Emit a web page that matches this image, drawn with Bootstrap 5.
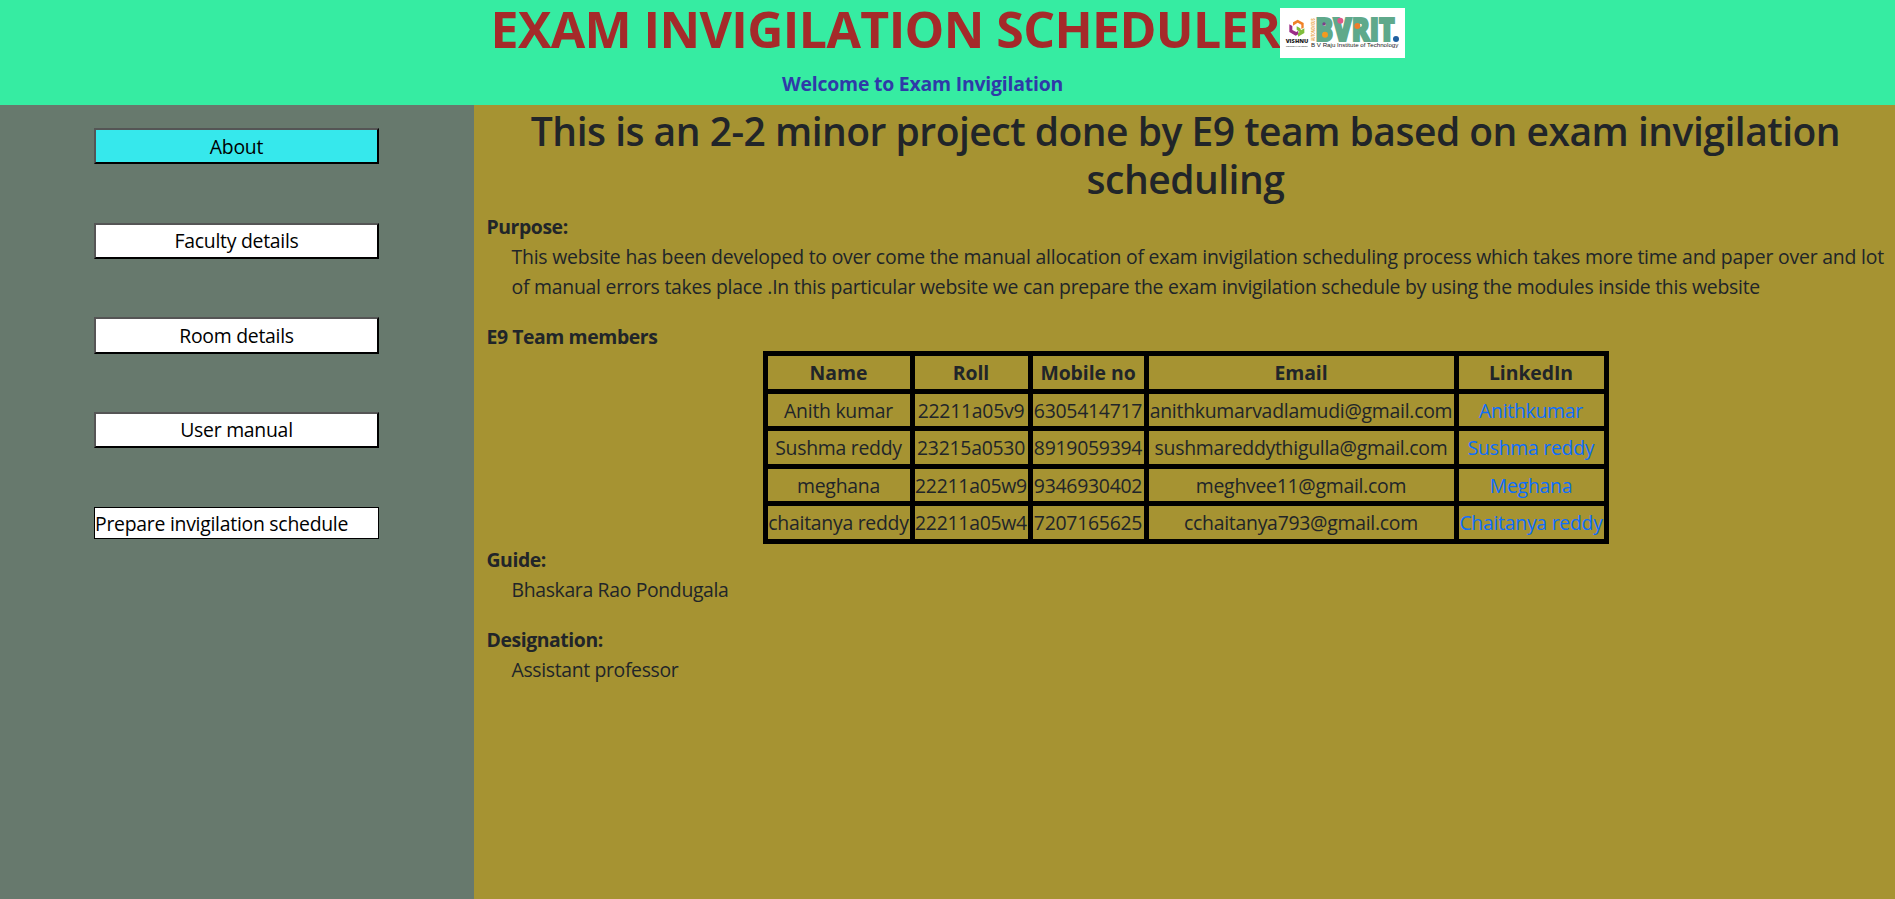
<!DOCTYPE html>
<html lang="en">
<head>
<meta charset="utf-8">
<meta name="viewport" content="width=device-width, initial-scale=1">
<title>Exam Invigilation Scheduler</title>
<link rel="stylesheet" href="https://cdn.jsdelivr.net/npm/bootstrap@5.3.0/dist/css/bootstrap.min.css">
<script src="https://cdn.jsdelivr.net/npm/bootstrap@5.3.0/dist/js/bootstrap.bundle.min.js"></script>
<style>
  body { font-family: "Open Sans", "Noto Sans", sans-serif; font-size: 19.4px; line-height: 30px; letter-spacing: -.2px; color: #212529; }
  .site-header { background: #36eca2; height: 105px; }
  .site-title { font-size: 50px; line-height: 58px; letter-spacing: -.61px; color: brown; padding-left: 1px; }
  .site-logo { margin-top: 8px; }
  .welcome { color: #2f3aa8; margin-top: 10.5px; padding-right: 50px; }
  .side { width: 474px; background: #67796d; padding: 23px 0 0 94px; }
  .side-item { height: 94.6px; }
  .side-btn { width: 285px; height: 36.4px; line-height: 30px; padding: 1px 0 0; background: #fff; color: #000; letter-spacing: -.26px;
    border: 2px solid; border-color: #555 #000 #000 #555; }
  .side-btn.current { background: #36e8ec; }
  .side-btn.plain { height: 32px; padding: 1px 0 0; border: 1px solid #000; margin-top: .6px; }
  .content { background: #a69332; }
  .content h1 { font-size: 39px; font-weight: 600; line-height: 48px; letter-spacing: -.5px; margin-bottom: 9px; padding: 2.3px 0 0 2px; }
  .content dl { margin: 0 0 0 12.5px; }
  .content dt { letter-spacing: -.42px; }
  .content dd { margin: 0 0 20px 25px; white-space: nowrap; letter-spacing: -.34px; }
  .content dd.purpose { letter-spacing: -.2px; }
  .purpose span { letter-spacing: -.243px; }
  .team { width: 846px; table-layout: fixed; border-collapse: collapse; text-align: center; white-space: nowrap; margin: -1.3px auto 1.3px; position: relative; left: 1px; }
  .team th, .team td { border: 5px solid #000; padding: 1.5px 0 0 0; height: 37.5px; letter-spacing: -.26px; }
  .team th { letter-spacing: -.05px; }
</style>
</head>
<body class="vh-100 d-flex flex-column overflow-hidden">
<header class="site-header flex-shrink-0">
  <div class="d-flex justify-content-center align-items-start">
    <h1 class="site-title fw-bold mb-0 text-nowrap">EXAM INVIGILATION SCHEDULER</h1>
    <svg class="site-logo" width="125" height="50" viewBox="33 24 375 150" role="img" aria-label="BVRIT">
      <rect x="33" y="24" width="375" height="150" fill="#fff"/>
      <path d="M72 77V67L86 59L104 69V83L97 87V74L86 68Z" fill="#f08228"/>
      <path d="M61 73L70 78V90L82 96L88 92V103L80 107L61 96Z" fill="#9b2c86"/>
      <path d="M83 79L94 85L96 91L106 85V99L87 110V99L92 96L83 89Z" fill="#80bd3c"/>
      <g font-family="'Liberation Sans', sans-serif" letter-spacing="0">
        <text x="50" y="130" font-family="'Open Sans', sans-serif" font-size="15" font-weight="800" textLength="68" lengthAdjust="spacingAndGlyphs" fill="#222">VISHNU</text>
        <text x="51" y="140" font-size="7" font-weight="700" textLength="65" lengthAdjust="spacingAndGlyphs" fill="#444">UNIVERSAL LEARNING</text>
        <text transform="translate(138 123) rotate(-90)" font-size="14" font-weight="700" textLength="68" lengthAdjust="spacingAndGlyphs" fill="#e9a13b">AUTONOMOUS</text>
        <text x="139" y="122" font-family="'Open Sans', sans-serif" font-weight="800" font-size="94" fill="#5fa98b" stroke="#5fa98b" stroke-width="6" textLength="238" lengthAdjust="spacingAndGlyphs">BVRIT</text>
        <circle cx="165" cy="72" r="5" fill="#7a3f8c"/>
        <circle cx="168" cy="104" r="9" fill="#f39a1e"/>
        <circle cx="214" cy="62" r="9" fill="#e0568a"/>
        <circle cx="265" cy="78" r="9" fill="#ee7d2b"/>
        <circle cx="381" cy="117" r="9" fill="#1f5fa0"/>
        <text x="126" y="140" font-size="17" textLength="262" lengthAdjust="spacingAndGlyphs" fill="#222">B V Raju Institute of Technology</text>
      </g>
    </svg>
  </div>
  <p class="welcome fw-bold text-center mb-0">Welcome to Exam Invigilation</p>
</header>
<div class="d-flex flex-grow-1">
  <nav class="side flex-shrink-0">
    <div class="side-item"><button class="side-btn current d-block">About</button></div>
    <div class="side-item"><button class="side-btn d-block">Faculty details</button></div>
    <div class="side-item"><button class="side-btn d-block">Room details</button></div>
    <div class="side-item"><button class="side-btn d-block">User manual</button></div>
    <div class="side-item"><button class="side-btn plain d-block text-start">Prepare invigilation schedule</button></div>
  </nav>
  <main class="content flex-grow-1">
    <h1 class="text-center">This is an 2-2 minor project done by E9 team based on exam invigilation<br>scheduling</h1>
    <dl>
      <dt>Purpose:</dt>
      <dd class="purpose">This website has been developed to over come the manual allocation of exam invigilation scheduling process which takes more time and paper over and lot<br><span>of manual errors takes place .In this particular website we can prepare the exam invigilation schedule by using the modules inside this website</span></dd>
      <dt>E9 Team members</dt>
    </dl>
    <table class="team">
      <colgroup><col style="width:147px"><col style="width:118px"><col style="width:116px"><col style="width:310px"><col style="width:150px"></colgroup>
      <thead><tr><th>Name</th><th>Roll</th><th>Mobile no</th><th>Email</th><th>LinkedIn</th></tr></thead>
      <tbody>
        <tr><td>Anith kumar</td><td>22211a05v9</td><td>6305414717</td><td>anithkumarvadlamudi@gmail.com</td><td><a href="#" class="text-decoration-none">Anithkumar</a></td></tr>
        <tr><td>Sushma reddy</td><td>23215a0530</td><td>8919059394</td><td>sushmareddythigulla@gmail.com</td><td><a href="#" class="text-decoration-none">Sushma reddy</a></td></tr>
        <tr><td>meghana</td><td>22211a05w9</td><td>9346930402</td><td>meghvee11@gmail.com</td><td><a href="#" class="text-decoration-none">Meghana</a></td></tr>
        <tr><td>chaitanya reddy</td><td>22211a05w4</td><td>7207165625</td><td>cchaitanya793@gmail.com</td><td><a href="#" class="text-decoration-none">Chaitanya reddy</a></td></tr>
      </tbody>
    </table>
    <dl>
      <dt>Guide:</dt>
      <dd>Bhaskara Rao Pondugala</dd>
      <dt>Designation:</dt>
      <dd>Assistant professor</dd>
    </dl>
  </main>
</div>
</body>
</html>
